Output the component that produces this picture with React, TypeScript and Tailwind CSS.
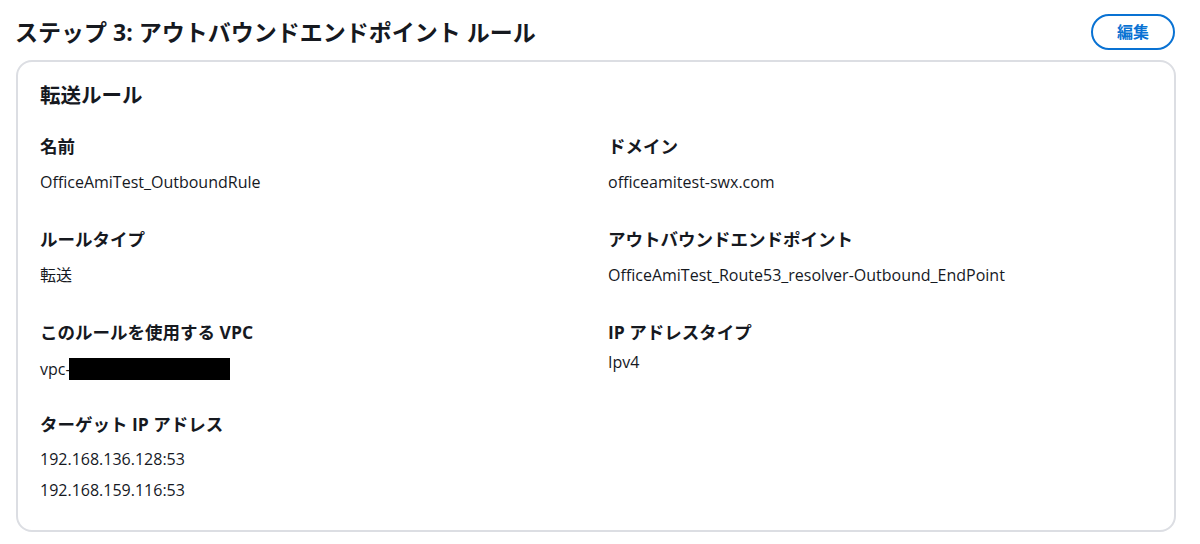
import React from "react";

const font = { fontFamily: '"Open Sans", "Noto Sans CJK JP", sans-serif' };

function Label({ children }: { children: React.ReactNode }) {
  return <div className="text-[17.5px] leading-[24px] font-bold text-[#16191f]">{children}</div>;
}

function Value({ children, className = "" }: { children: React.ReactNode; className?: string }) {
  return <div className={"text-[16px] leading-[22px] text-[#16191f] " + className}>{children}</div>;
}

export default function App() {
  return (
    <div className="w-[1200px] h-[544px] bg-white overflow-hidden" style={font}>
      <div className="flex items-center justify-between pl-[15px] pr-[25px] pt-[14px] h-[50px]">
        <h1 className="text-[23px] leading-[36px] font-bold text-[#16191f]">
          ステップ 3: アウトバウンドエンドポイント ルール
        </h1>
        <button className="w-[84px] h-[36px] rounded-full border-2 border-[#0972d3] text-[#0972d3] text-[16px] font-bold flex items-center justify-center">
          編集
        </button>
      </div>
      <div className="mt-[10px] ml-[16px] w-[1160px] h-[472px] border-2 border-[#dcdee3] rounded-[16px] px-[22px] pt-[18px]">
        <h2 className="text-[20.5px] leading-[30px] font-bold text-[#16191f]">転送ルール</h2>
        <div className="grid grid-cols-2 gap-x-[24px] mt-[24px]">
          <div className="flex flex-col gap-[34px]">
            <div>
              <Label>名前</Label>
              <Value className="mt-[13px]">OfficeAmiTest_OutboundRule</Value>
            </div>
            <div>
              <Label>ルールタイプ</Label>
              <Value className="mt-[13px]">転送</Value>
            </div>
            <div>
              <Label>このルールを使用する VPC</Label>
              <Value className="mt-[14px] flex items-center">
                vpc-<span className="inline-block -ml-[2px] w-[161px] h-[22px] bg-black"></span>
              </Value>
            </div>
            <div className="-mt-[2px]">
              <Label>ターゲット IP アドレス</Label>
              <Value className="mt-[12px]">192.168.136.128:53</Value>
              <Value className="mt-[9px]">192.168.159.116:53</Value>
            </div>
          </div>
          <div className="flex flex-col gap-[34px]">
            <div>
              <Label>ドメイン</Label>
              <Value className="mt-[13px]">officeamitest-swx.com</Value>
            </div>
            <div>
              <Label>アウトバウンドエンドポイント</Label>
              <Value className="mt-[13px]">OfficeAmiTest_Route53_resolver-Outbound_EndPoint</Value>
            </div>
            <div>
              <Label>IP アドレスタイプ</Label>
              <Value className="mt-[7px]">Ipv4</Value>
            </div>
          </div>
        </div>
      </div>
    </div>
  );
}
